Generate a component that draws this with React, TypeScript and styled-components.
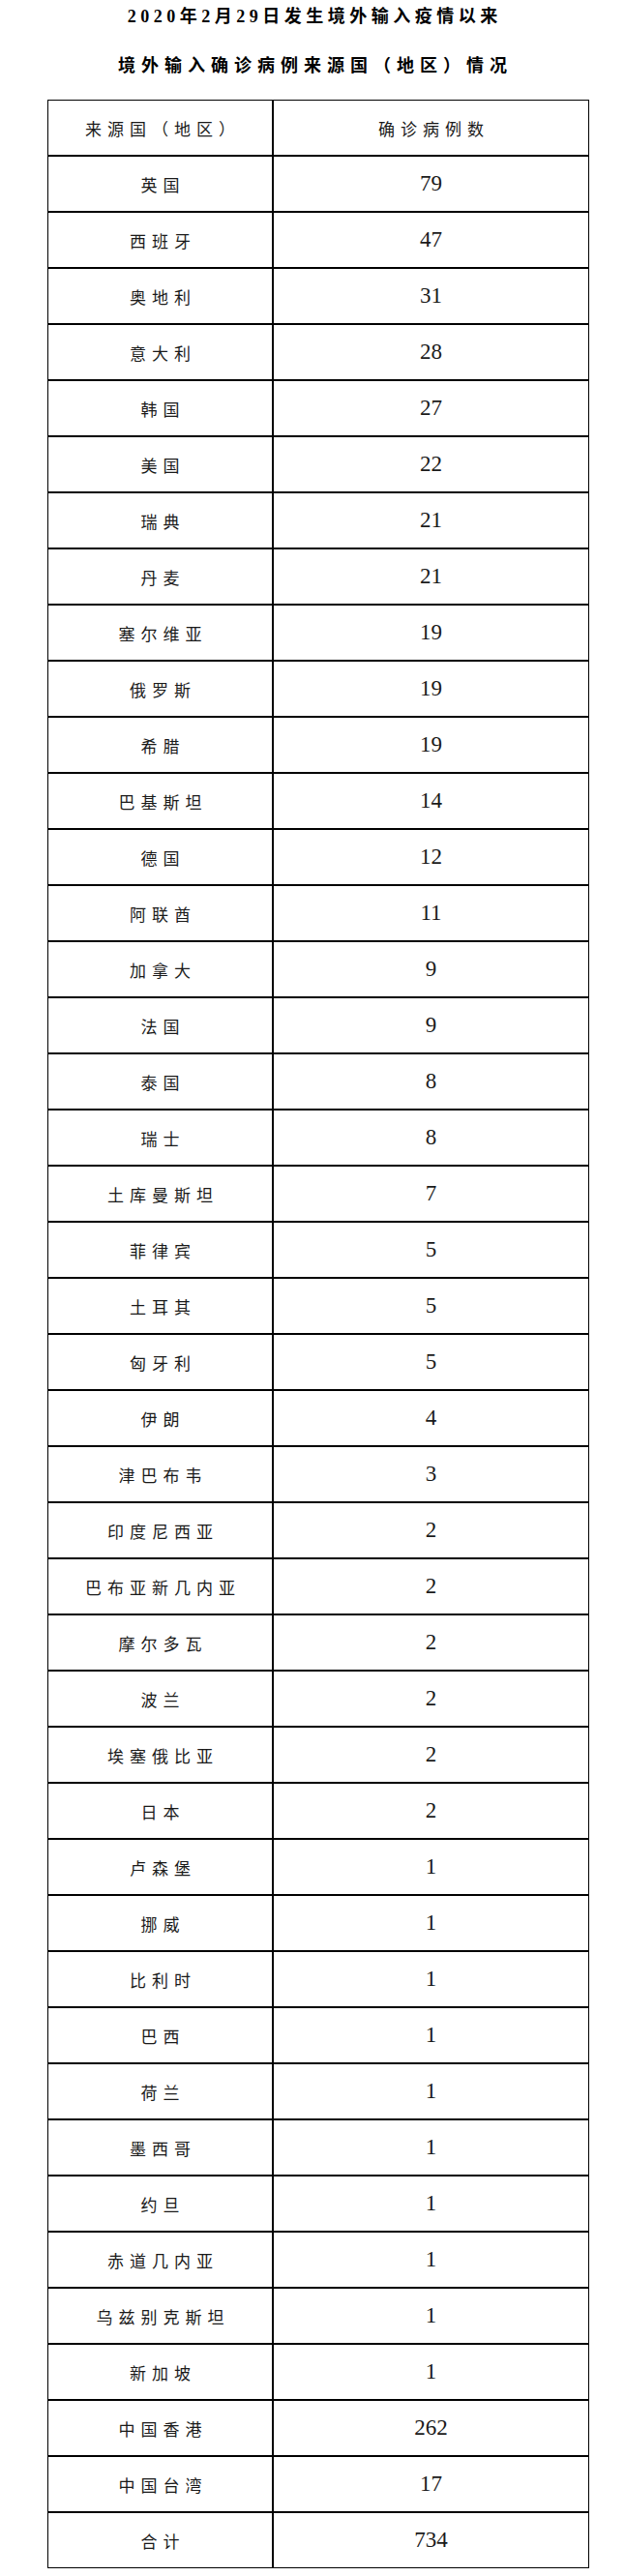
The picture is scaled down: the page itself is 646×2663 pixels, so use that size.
import React from "react";
import styled, { createGlobalStyle } from "styled-components";

const rows: [string, number][] = [
  ["英国", 79],
  ["西班牙", 47],
  ["奥地利", 31],
  ["意大利", 28],
  ["韩国", 27],
  ["美国", 22],
  ["瑞典", 21],
  ["丹麦", 21],
  ["塞尔维亚", 19],
  ["俄罗斯", 19],
  ["希腊", 19],
  ["巴基斯坦", 14],
  ["德国", 12],
  ["阿联酋", 11],
  ["加拿大", 9],
  ["法国", 9],
  ["泰国", 8],
  ["瑞士", 8],
  ["土库曼斯坦", 7],
  ["菲律宾", 5],
  ["土耳其", 5],
  ["匈牙利", 5],
  ["伊朗", 4],
  ["津巴布韦", 3],
  ["印度尼西亚", 2],
  ["巴布亚新几内亚", 2],
  ["摩尔多瓦", 2],
  ["波兰", 2],
  ["埃塞俄比亚", 2],
  ["日本", 2],
  ["卢森堡", 1],
  ["挪威", 1],
  ["比利时", 1],
  ["巴西", 1],
  ["荷兰", 1],
  ["墨西哥", 1],
  ["约旦", 1],
  ["赤道几内亚", 1],
  ["乌兹别克斯坦", 1],
  ["新加坡", 1],
  ["中国香港", 262],
  ["中国台湾", 17],
  ["合计", 734],
];

const GlobalStyle = createGlobalStyle`
  body {
    margin: 0;
    background: #fff;
    color: #111;
    font-family: "Liberation Serif", "Noto Sans CJK SC", serif;
  }
`;

const Page = styled.div`
  width: 646px;
  padding-bottom: 8px;
`;

const Title = styled.h1<{ $spacing: number; $gap: number }>`
  margin: 0 0 ${(p) => p.$gap}px;
  height: 34px;
  line-height: 34px;
  font-size: 18px;
  font-weight: 700;
  text-align: center;
  letter-spacing: ${(p) => p.$spacing}px;
  padding-left: ${(p) => p.$spacing}px;
  color: #000;
`;

const Table = styled.div`
  margin-left: 49px;
  width: 558px;
  border: 1px solid #000;
  display: grid;
  grid-template-columns: 233px 1fr;
`;

const Cell = styled.div<{ $numeric?: boolean; $left?: boolean; $last?: boolean }>`
  height: 56px;
  display: flex;
  align-items: center;
  justify-content: center;
  border-bottom: ${(p) => (p.$last ? "0" : "2px solid #000")};
  border-right: ${(p) => (p.$left ? "2px solid #000" : "0")};
  font-size: ${(p) => (p.$numeric ? "23px" : "17px")};
  letter-spacing: ${(p) => (p.$numeric ? "0" : "6px")};
  padding-left: ${(p) => (p.$numeric ? "0" : "6px")};
  color: #1a1a1a;
`;

export default function App() {
  return (
    <Page>
      <GlobalStyle />
      <Title $spacing={4.5} $gap={17}>
        2020年2月29日发生境外输入疫情以来
      </Title>
      <Title $spacing={6} $gap={18}>
        境外输入确诊病例来源国（地区）情况
      </Title>
      <Table>
        <Cell $left>来源国（地区）</Cell>
        <Cell>确诊病例数</Cell>
        {rows.map(([name, count], i) => {
          const last = i === rows.length - 1;
          return (
            <React.Fragment key={name}>
              <Cell $left $last={last}>
                {name}
              </Cell>
              <Cell $numeric $last={last}>
                {count}
              </Cell>
            </React.Fragment>
          );
        })}
      </Table>
    </Page>
  );
}
